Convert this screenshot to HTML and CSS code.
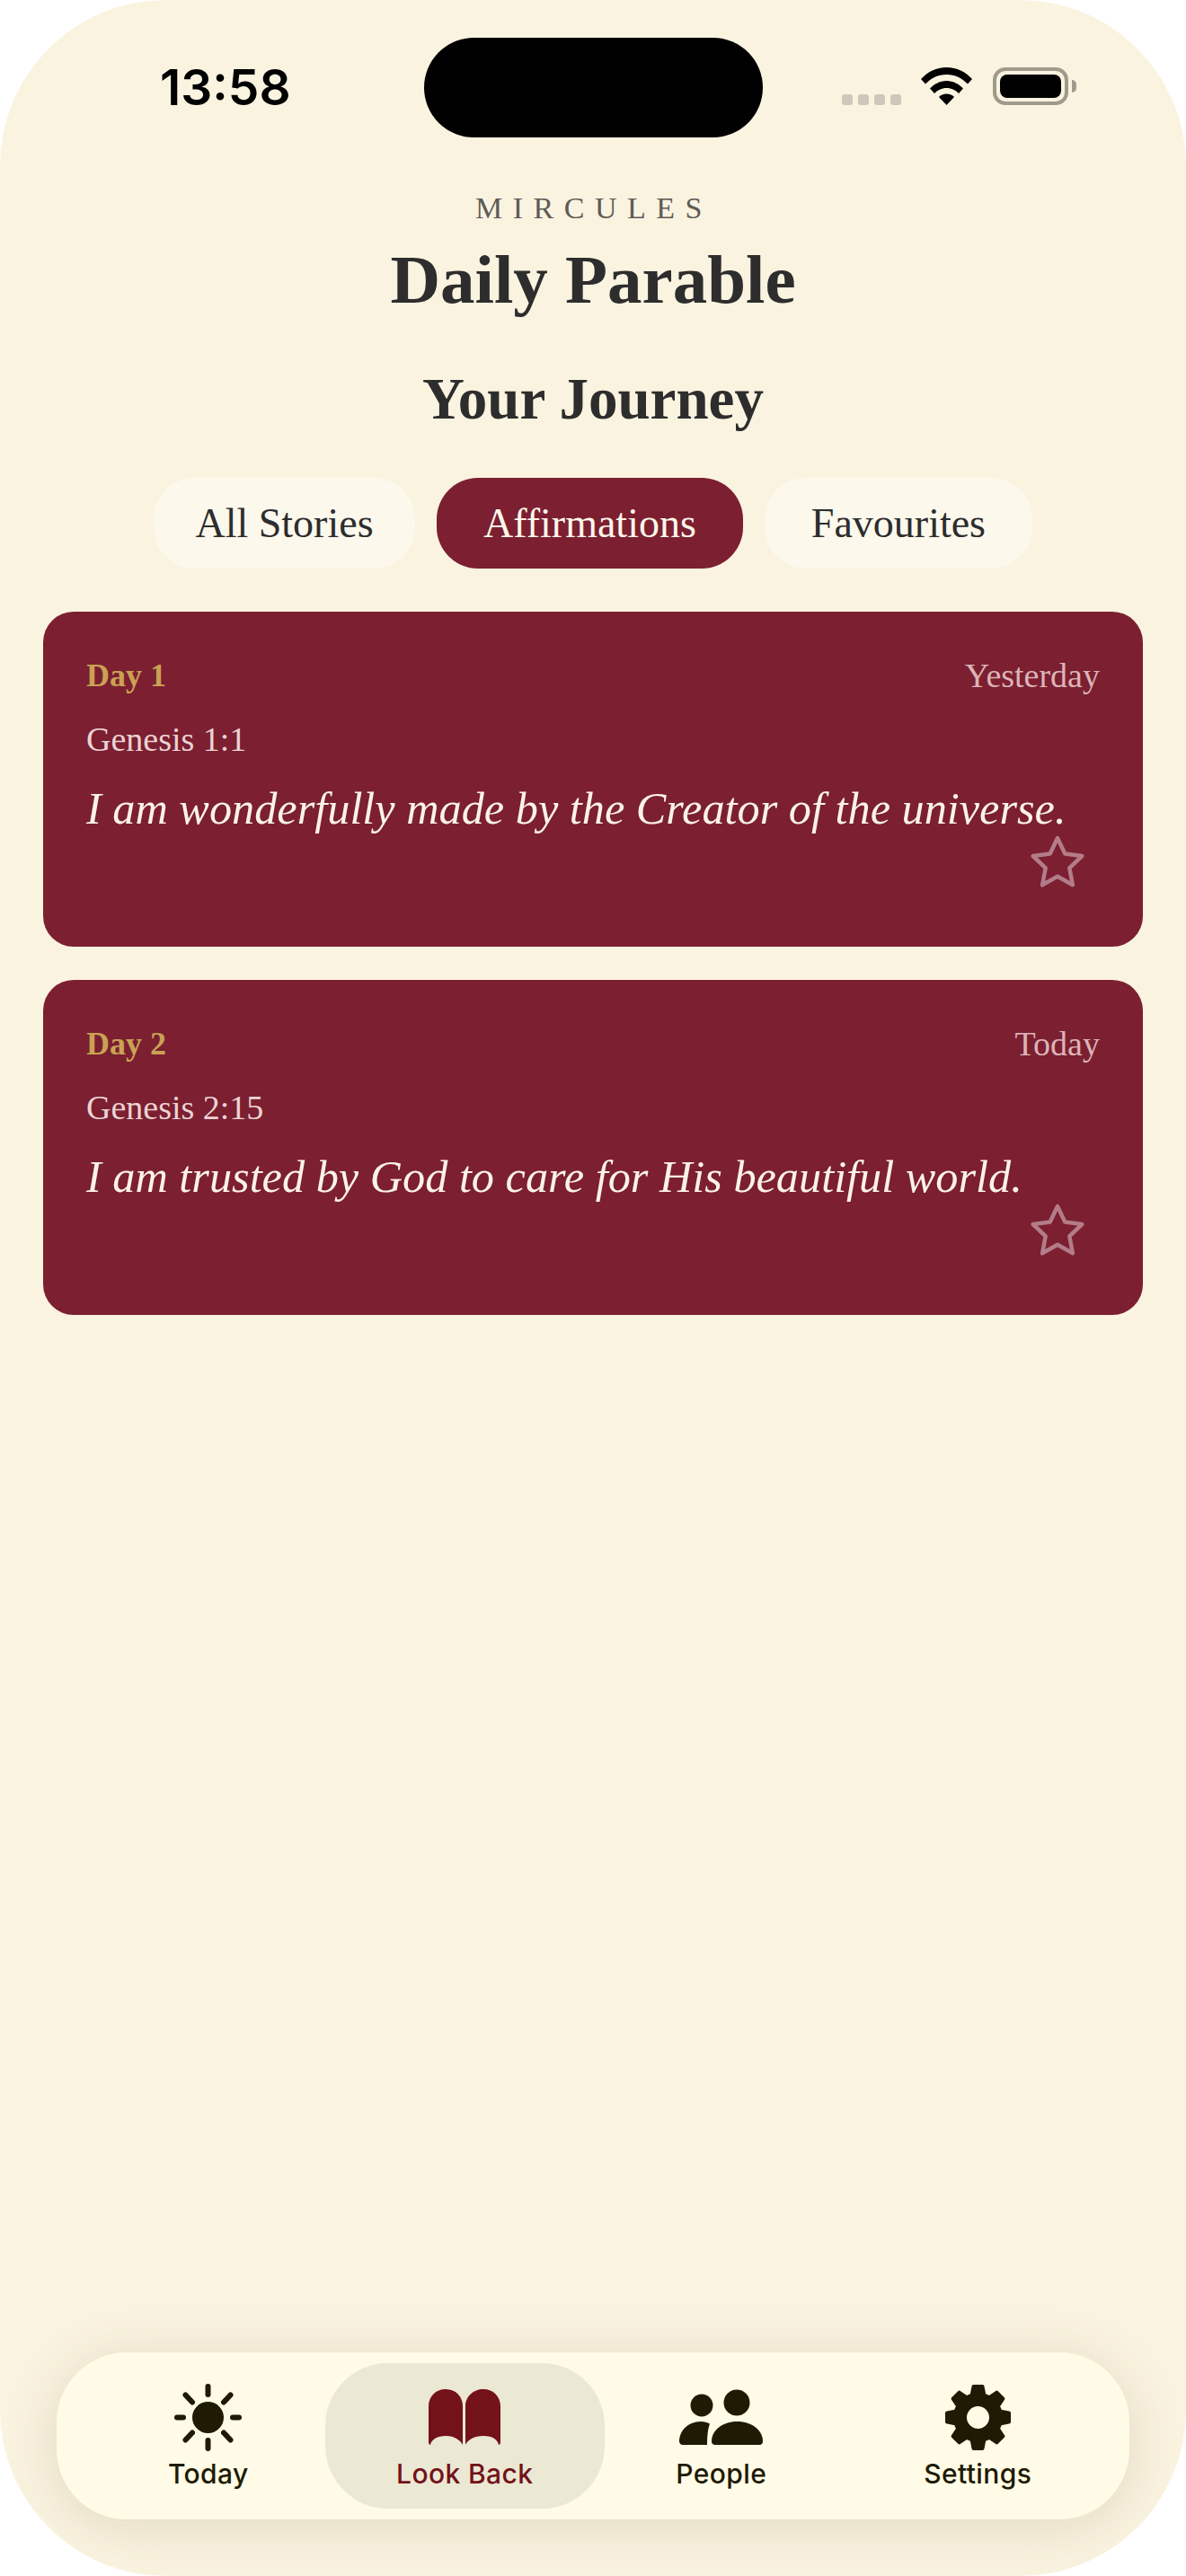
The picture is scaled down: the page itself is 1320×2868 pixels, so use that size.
FILE: index.html
```html
<!DOCTYPE html>
<html lang="en">
<head>
    <meta charset="UTF-8">
    <title>Daily Parable</title>
    <link rel="stylesheet" href="styles.css">
</head>
<body>
    <div class="phone">
        <div class="status-bar">
            <span class="time">13:58</span>
            <div class="island"></div>
            <div class="status-icons">
                <div class="signal"><i></i><i></i><i></i><i></i></div>
                <svg class="wifi" width="57" height="42" viewBox="0 0 57 42">
                    <path d="M0 13C7.500 5 17 0 28.500 0S49.500 5 57 13l-5 5.500C45.500 12 38 8 28.500 8S11.500 12 5 18.500z"/>
                    <path d="M10 23.500C15 18.500 21 15 28.500 15S42 18.500 47 23.500l-5 5.500C38.500 25.500 34 23 28.500 23S18.500 25.500 15 29z"/>
                    <path d="M20 33C22 31 25 29.500 28.500 29.500S35 31 37 33L28.500 42z"/>
                </svg>
                <div class="battery"><div class="battery-fill"></div></div>
                <div class="battery-cap"></div>
            </div>
        </div>

        <header class="header">
            <div class="brand">MIRCULES</div>
            <h1>Daily Parable</h1>
            <h2>Your Journey</h2>
        </header>

        <div class="tabs">
            <button class="tab">All Stories</button>
            <button class="tab active">Affirmations</button>
            <button class="tab">Favourites</button>
        </div>

        <main class="cards">
            <article class="card">
                <div class="card-top">
                    <span class="day">Day 1</span>
                    <span class="when">Yesterday</span>
                </div>
                <p class="verse">Genesis 1:1</p>
                <p class="quote">I am wonderfully made by the Creator of the universe.</p>
                <svg class="star" width="60" height="58" viewBox="0 0 60 58"><path d="M30 3l8.300 17.500 19 2.500-14 13.300 3.600 19L30 45.800 13.100 55.300l3.600-19-14-13.300 19-2.500z"/></svg>
            </article>
            <article class="card">
                <div class="card-top">
                    <span class="day">Day 2</span>
                    <span class="when">Today</span>
                </div>
                <p class="verse">Genesis 2:15</p>
                <p class="quote">I am trusted by God to care for His beautiful world.</p>
                <svg class="star" width="60" height="58" viewBox="0 0 60 58"><path d="M30 3l8.300 17.500 19 2.500-14 13.300 3.600 19L30 45.800 13.100 55.300l3.600-19-14-13.300 19-2.500z"/></svg>
            </article>
        </main>

        <nav class="tabbar">
            <a class="nav-item">
                <div class="nav-icon">
                    <svg width="75" height="75" viewBox="0 0 75 75">
                        <circle cx="37.500" cy="37.500" r="17.500"/>
                        <path class="rays" d="M37.500 3v9M37.500 63v9M3 37.500h7M65 37.500h7M12.500 12.500l7.500 8M62.500 12.500l-7.500 8M12.500 62.500l7.500-8M62.500 62.500l-7.500-8"/>
                    </svg>
                </div>
                <span>Today</span>
            </a>
            <a class="nav-item active">
                <div class="nav-icon">
                    <svg width="80" height="62" viewBox="0 0 80 62">
                        <path d="M0 19C0 8 8 0 19 0S38 8 38 19v43c-3-6-10-10-19-10S3 56 2 62c-1 0-2-1-2-3z"/>
                        <path d="M80 19C80 8 72 0 61 0S41 8 41 19v43c3-6 10-10 20-10s16 4 17 10c1 0 2-1 2-3z"/>
                    </svg>
                </div>
                <span>Look Back</span>
            </a>
            <a class="nav-item">
                <div class="nav-icon">
                    <svg width="93" height="62" viewBox="0 0 93 62">
                        <circle cx="25" cy="18" r="12.500"/>
                        <circle cx="64" cy="15" r="14.500"/>
                        <path d="M4 62C1.500 62 0 60 0 58 0 46 10.500 36 24 36c4 0 7 1 10 2.500C32 43 31 52 31 62z"/>
                        <path d="M40 62c-3 0-4-2-4-4 0-12 12-22 28.500-22S93 46 93 58c0 2-1 4-4 4z"/>
                    </svg>
                </div>
                <span>People</span>
            </a>
            <a class="nav-item">
                <div class="nav-icon">
                    <svg width="73" height="73" viewBox="0 0 73 73">
                        <defs><path id="tooth" d="M29.500 2q0-2 2-2h10q2 0 2 2l3 15h-20z"/></defs>
                        <circle class="gear-ring" cx="36.500" cy="36.500" r="20"/>
                        <use href="#tooth"/>
                        <use href="#tooth" transform="rotate(45 36.500 36.500)"/>
                        <use href="#tooth" transform="rotate(90 36.500 36.500)"/>
                        <use href="#tooth" transform="rotate(135 36.500 36.500)"/>
                        <use href="#tooth" transform="rotate(180 36.500 36.500)"/>
                        <use href="#tooth" transform="rotate(225 36.500 36.500)"/>
                        <use href="#tooth" transform="rotate(270 36.500 36.500)"/>
                        <use href="#tooth" transform="rotate(315 36.500 36.500)"/>
                    </svg>
                </div>
                <span>Settings</span>
            </a>
        </nav>
    </div>
</body>
</html>
```

FILE: styles.css
```css
* {
    box-sizing: border-box;
}

body {
    margin: 0;
    background: #fff;
    font-family: 'Liberation Serif', serif;
}

.phone {
    position: relative;
    display: flex;
    flex-direction: column;
    width: 1320px;
    height: 2868px;
    overflow: hidden;
    background: #faf3e0;
    border-radius: 185px;
}

/* Статус бар */
.status-bar {
    display: flex;
    align-items: flex-start;
    height: 152px;
    padding-top: 42px;
}

.time {
    width: 472px;
    padding: 34px 0 0 178px;
    font-family: 'Inter', sans-serif;
    font-size: 55px;
    font-weight: 600;
    line-height: 42px;
    color: #000;
}

.island {
    width: 377px;
    height: 111px;
    background: #000;
    border-radius: 56px;
}

.status-icons {
    display: flex;
    align-items: flex-end;
    height: 75px;
    padding-left: 88px;
}

.signal {
    display: flex;
    gap: 6px;
}

.signal i {
    width: 12px;
    height: 12px;
    background: #cdc8ba;
    border-radius: 3px;
}

.wifi {
    margin-left: 22px;
}

.battery {
    width: 84px;
    height: 42px;
    margin-left: 23px;
    padding: 4px;
    border: 4px solid #9f9a8b;
    border-radius: 14px;
}

.battery-fill {
    height: 100%;
    background: #000;
    border-radius: 8px;
}

.battery-cap {
    width: 5px;
    height: 14px;
    margin: 0 0 14px 4px;
    background: #9f9a8b;
    border-radius: 0 5px 5px 0;
}

/* Заголовки */
.header {
    text-align: center;
    color: #2d2d2d;
}

.brand {
    margin-top: 60px;
    padding-left: 2px;
    font-size: 34px;
    line-height: 40px;
    letter-spacing: 11.5px;
    color: #5e5b55;
}

h1 {
    margin: 17px 0 0;
    font-size: 77px;
    line-height: 84px;
    font-weight: 700;
}

h2 {
    margin: 57px 0 0;
    font-size: 65px;
    line-height: 68px;
    font-weight: 700;
}

/* Табы */
.tabs {
    display: flex;
    justify-content: center;
    gap: 24px;
    margin-top: 54px;
}

.tab {
    height: 101px;
    padding: 0 46.5px;
    border: none;
    border-radius: 46px;
    background: #fcf8ec;
    color: #2d2d2d;
    font-family: inherit;
    font-size: 46px;
}

.tab + .tab {
    padding: 0 52px;
}

.tab.active {
    background: #7b1f31;
    color: #fdf7ea;
}

/* Карточки */
.cards {
    display: flex;
    flex-direction: column;
    gap: 37px;
    margin: 48px 48px 0;
}

.card {
    position: relative;
    height: 373px;
    padding: 49px 48px 0;
    background: #7b1f31;
    border-radius: 34px;
}

.card-top {
    display: flex;
    justify-content: space-between;
    align-items: center;
    height: 44px;
}

.day {
    font-size: 36px;
    font-weight: 700;
    color: #c9a253;
}

.when {
    font-size: 38px;
    color: #dcb4b6;
}

.verse {
    margin: 27px 0 0;
    font-size: 38px;
    line-height: 44px;
    color: #ecd3d3;
}

.quote {
    margin: 25px 0 0;
    font-size: 50.3px;
    line-height: 60px;
    font-style: italic;
    color: #fbf3e4;
}

.star {
    position: absolute;
    right: 65px;
    bottom: 66px;
    fill: none;
    stroke: #b37c88;
    stroke-width: 4.5;
    stroke-linejoin: round;
}

/* Нижнее меню */
.tabbar {
    position: absolute;
    left: 63px;
    right: 63px;
    bottom: 63px;
    display: grid;
    grid-template-columns: repeat(4, 1fr);
    height: 186px;
    padding: 12px 26px;
    background: #fffbe6;
    border-radius: 78px;
    box-shadow: 0 8px 60px rgba(100, 85, 40, 0.16);
}

.nav-item {
    display: flex;
    flex-direction: column;
    align-items: center;
    height: 162px;
    padding-top: 22px;
    border-radius: 70px;
    font-family: 'Inter', sans-serif;
    font-size: 30px;
    font-weight: 500;
    letter-spacing: 0.4px;
    line-height: 38px;
    color: #1f1a04;
}

.nav-item.active {
    margin: 0 -13px;
    background: #ebe8d4;
    color: #731218;
}

.nav-icon {
    display: flex;
    align-items: center;
    height: 76px;
    margin-bottom: 6px;
}

.nav-icon svg {
    fill: currentColor;
}

.rays {
    fill: none;
    stroke: currentColor;
    stroke-width: 6;
    stroke-linecap: round;
}

.gear-ring {
    fill: none;
    stroke: currentColor;
    stroke-width: 15;
}
```
